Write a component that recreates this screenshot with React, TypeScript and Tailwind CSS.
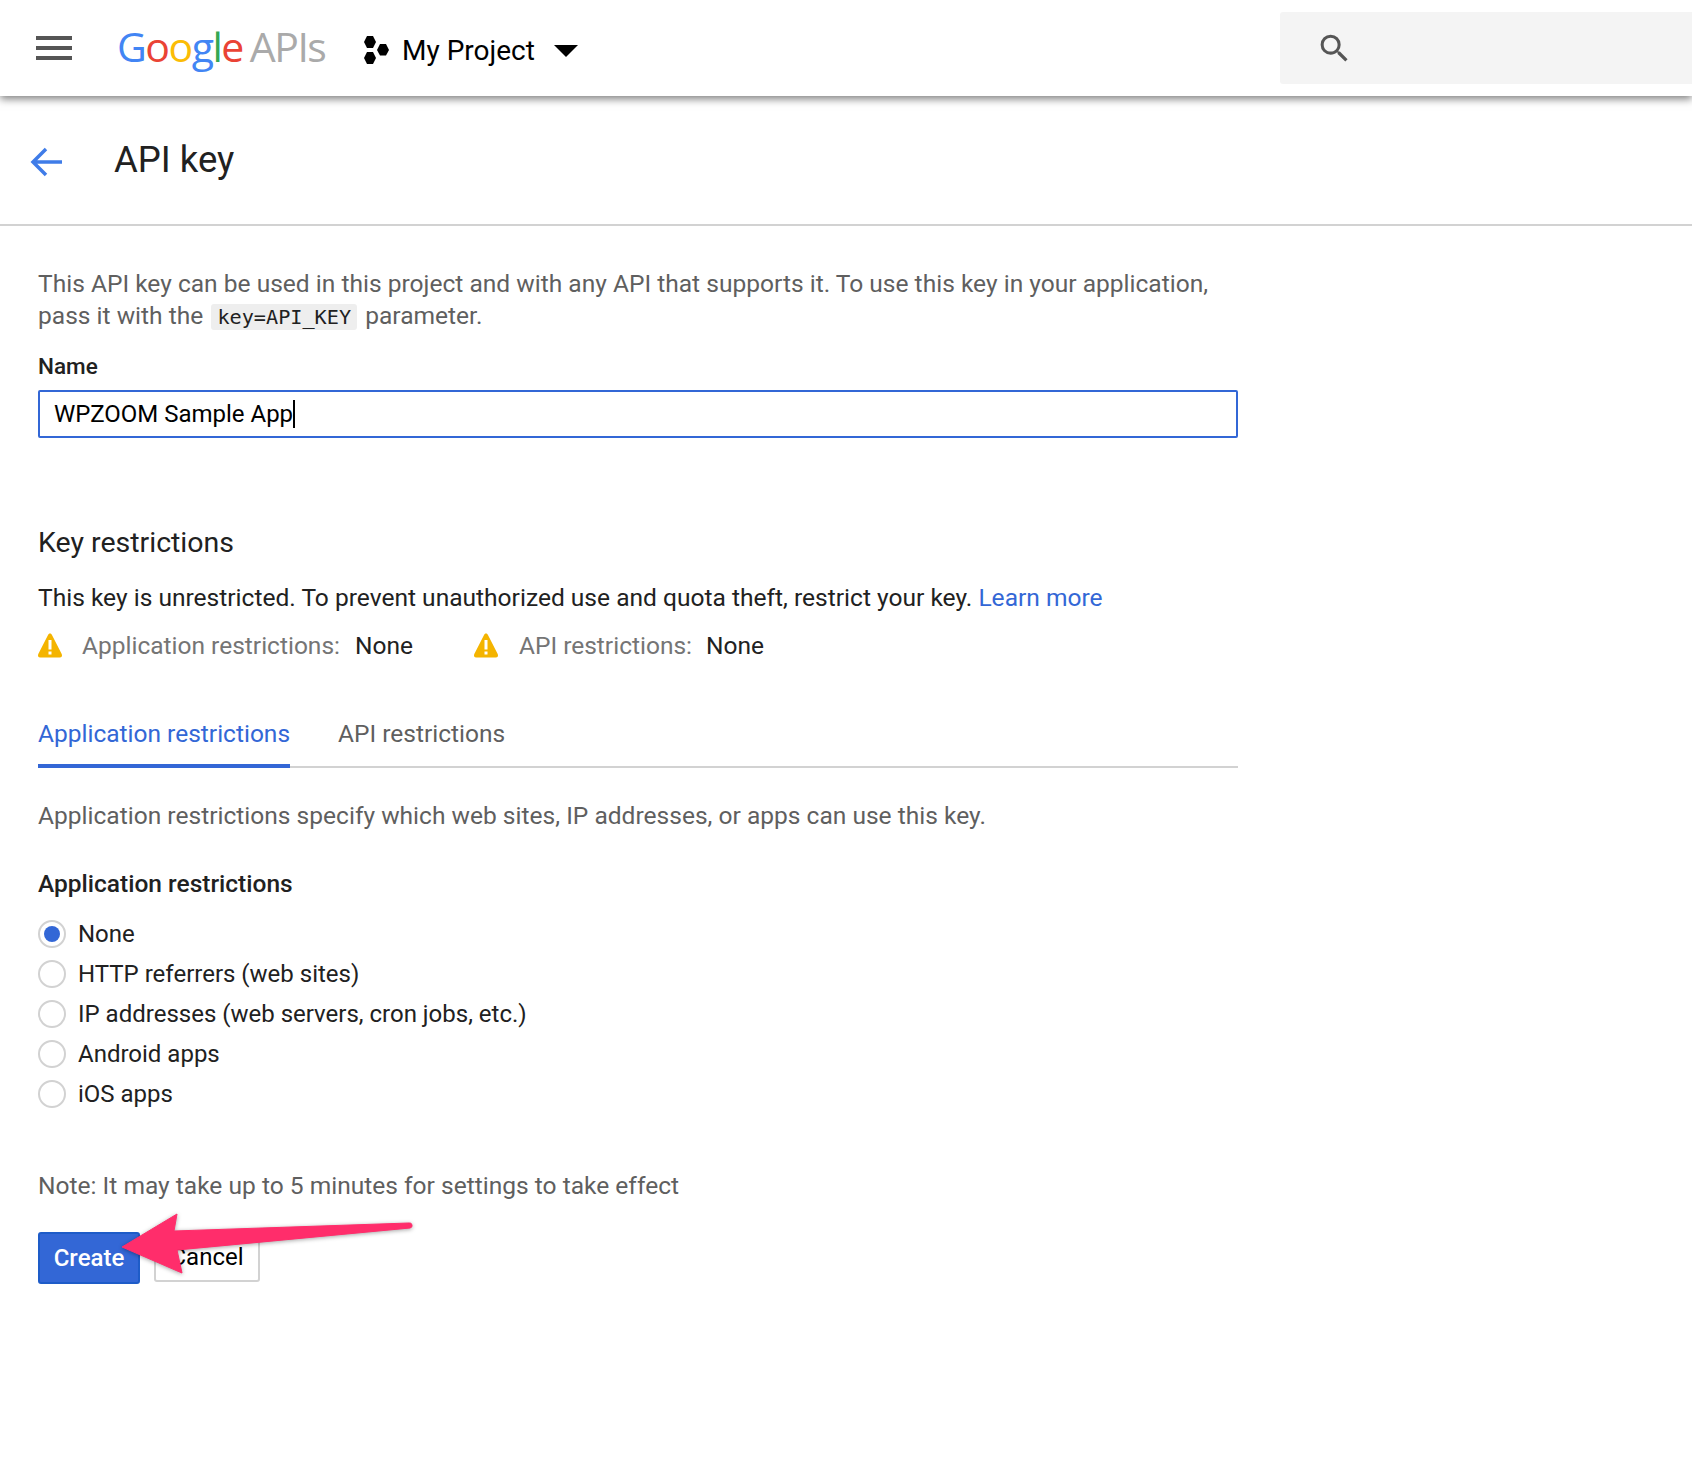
const ROBOTO = { fontFamily: 'Roboto, sans-serif' }

const RADIOS = [
  'None',
  'HTTP referrers (web sites)',
  'IP addresses (web servers, cron jobs, etc.)',
  'Android apps',
  'iOS apps',
]

function Warning() {
  return (
    <svg width="26" height="27" viewBox="0 0 26 27" className="shrink-0">
      <path d="M13 1.500c1 0 1.600.7 2.100 1.700L24.700 22c.8 1.700.1 3.500-2 3.500H3.300c-2.100 0-2.800-1.800-2-3.500L10.900 3.200c.5-1 1.100-1.700 2.100-1.700Z" fill="#f4b400" />
      <rect x="11.500" y="8" width="3" height="9.500" fill="#fff" />
      <rect x="11.500" y="19.500" width="3" height="3" fill="#fff" />
    </svg>
  )
}

function Radio({ label, checked }: { label: string; checked?: boolean }) {
  return (
    <div className="flex items-center h-10">
      <div className="w-[28px] h-[28px] rounded-full border-2 border-[#d2d2d2] flex items-center justify-center shrink-0">
        {checked && <div className="w-[16px] h-[16px] rounded-full bg-[#3367d6]" />}
      </div>
      <span className="ml-[12px] text-[24px] text-[#212121]">{label}</span>
    </div>
  )
}

export default function App() {
  return (
    <div className="relative h-[1462px] overflow-hidden bg-white" style={ROBOTO}>

      {/* top bar */}
      <div className="h-24 flex items-center bg-white shadow-[0_3px_8px_rgba(0,0,0,0.5)] relative">
        <div className="ml-9 w-9 flex flex-col gap-[6px]">
          <div className="h-1 bg-[#555]" />
          <div className="h-1 bg-[#555]" />
          <div className="h-1 bg-[#555]" />
        </div>
        <div className="ml-[45px] mb-[3px] w-[210px] flex items-baseline text-[41px] tracking-[-1.5px] leading-none" style={{ fontFamily: '"Open Sans", sans-serif' }}>
          <span className="text-[#4285f4] font-medium">G</span>
          <span className="text-[#ea4335] font-medium">o</span>
          <span className="text-[#fbbc05] font-medium">o</span>
          <span className="text-[#4285f4] font-medium">g</span>
          <span className="text-[#34a853] font-medium">l</span>
          <span className="text-[#ea4335] font-medium">e</span>
          <span className="ml-[7px] text-[#aaaaaa]">APIs</span>
        </div>
        <svg width="28" height="30" viewBox="0 0 28 30" className="ml-[34px] mt-[3px] shrink-0">
          <path d="M6 1h6l3 6-3 6H6L3 7Z" />
          <path d="M6 17h6l3 6-3 6H6l-3-6Z" />
          <path d="M19 9h6l3 6-3 5.500h-6l-3-5.500Z" />
        </svg>
        <span className="ml-[13px] mt-[6px] text-[28px] text-black">My Project</span>
        <svg width="24" height="12" viewBox="0 0 24 12" className="ml-[19px] mt-[6px] shrink-0">
          <path d="M0 0h24L12 12Z" />
        </svg>
        <div className="ml-auto w-[412px] h-[72px] bg-[#f4f4f4] rounded-l-[3px] flex items-center pl-[36px] self-start mt-3">
          <svg width="37" height="37" viewBox="0 0 24 24" fill="#555">
            <path d="M15.500 14h-.79l-.28-.27A6.470 6.470 0 0 0 16 9.500 6.500 6.500 0 1 0 9.500 16c1.610 0 3.090-.59 4.230-1.570l.27.28v.79l5 4.990L20.490 19l-4.990-5zm-6 0C7.010 14 5 11.990 5 9.500S7.010 5 9.500 5 14 7.010 14 9.500 11.990 14 9.500 14z" />
          </svg>
        </div>
      </div>

      {/* page title */}
      <div className="h-[130px] flex items-center border-b-2 border-[#d2d2d2]">
        <svg width="36" height="32" viewBox="0 0 36 32" className="ml-[29px] mt-[3px] shrink-0" fill="none" stroke="#3f7ce8" strokeWidth="3.500">
          <path d="M33 16H4M17 3 4 16l13 13" />
        </svg>
        <h1 className="ml-[49px] text-[36.500px] text-[#212121]">API key</h1>
      </div>

      <div className="pl-[38px] w-[1238px]">
        <p className="mt-[42px] text-[24.560px] leading-[32px] text-[#5f5f5f] whitespace-nowrap">
          This API key can be used in this project and with any API that supports it. To use this key in your application,
          <br />
          pass it with the{' '}
          <code className="mx-[2px] px-[6px] py-[1px] bg-[#eeeeee] rounded-[3px] text-[20.200px] text-[#212121]" style={{ fontFamily: '"DejaVu Sans Mono", monospace' }}>key=API_KEY</code>{' '}
          parameter.
        </p>

        <label className="block mt-[17px] text-[22.500px] leading-[32px] font-medium text-[#212121]">Name</label>
        <div className="mt-[8px] h-12 border-2 border-[#3367d6] rounded-[2px] flex items-center pl-[14px] text-[24px] text-black">
          WPZOOM Sample App
          <div className="w-[2px] h-[28px] bg-black" />
        </div>

        <h2 className="mt-[85px] text-[28.500px] leading-10 text-[#212121]">Key restrictions</h2>
        <p className="mt-[19px] text-[24.560px] leading-[32px] text-[#212121] whitespace-nowrap">
          This key is unrestricted. To prevent unauthorized use and quota theft, restrict your key. <span className="text-[#3367d6]">Learn more</span>
        </p>

        <div className="mt-[16px] h-8 flex items-center text-[24.500px] whitespace-nowrap">
          <div className="-ml-[1px] -mt-[1px]"><Warning /></div>
          <span className="ml-[19px] text-[#757575]">Application restrictions:</span>
          <span className="ml-[15px] text-[#212121]">None</span>
          <div className="ml-[60px] -mt-[1px]"><Warning /></div>
          <span className="ml-[20px] text-[#757575]">API restrictions:</span>
          <span className="ml-[14px] text-[#212121]">None</span>
        </div>

        <div className="mt-[43px] flex border-b-2 border-[#d2d2d2] h-[63px] text-[24.500px]">
          <div className="h-[63px] border-b-4 border-[#3367d6] text-[#3367d6] flex items-center">Application restrictions</div>
          <div className="ml-12 flex items-center text-[#5f5f5f] pb-[2px]">API restrictions</div>
        </div>

        <p className="mt-[32px] text-[24.560px] leading-[32px] text-[#5f5f5f] whitespace-nowrap">
          Application restrictions specify which web sites, IP addresses, or apps can use this key.
        </p>

        <h3 className="mt-[36px] text-[24.500px] leading-[32px] font-medium text-[#212121]">Application restrictions</h3>

        <div className="mt-[14px]">
          {RADIOS.map((r, i) => <Radio key={r} label={r} checked={i === 0} />)}
        </div>

        <p className="mt-[56px] text-[24.560px] leading-[32px] text-[#5f5f5f] whitespace-nowrap">
          Note: It may take up to 5 minutes for settings to take effect
        </p>

        <div className="mt-[30px] flex gap-[14px] items-start">
          <button className="w-[102px] h-[52px] rounded-[3px] bg-[#3367d6] border-2 border-[#1e5cc8] text-white text-[24px] font-medium">Create</button>
          <button className="w-[106px] h-[50px] rounded-[3px] bg-white border-2 border-[#d2d2d2] text-black text-[24px]">Cancel</button>
        </div>
      </div>

      {/* annotation arrow */}
      <svg width="300" height="70" viewBox="0 0 300 70" className="absolute left-[118px] top-[1210px] drop-shadow-[0_1px_2px_rgba(0,0,0,0.35)]">
        <path d="M4 37 59 4 56 21 291 13a2 2 0 0 1 1 5L59 40l5 23Z" fill="#ff2d6b" stroke="#ff2d6b" strokeWidth="1" strokeLinejoin="round" />
      </svg>
    </div>
  )
}
